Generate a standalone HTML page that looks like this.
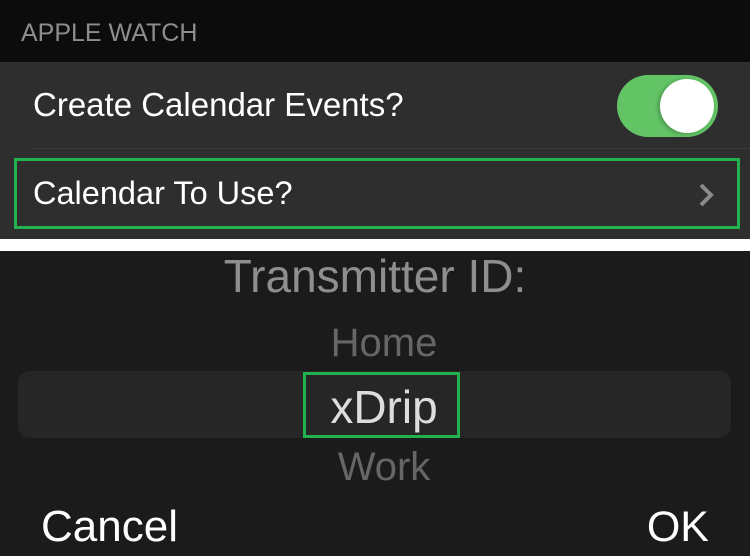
<!DOCTYPE html>
<html><head><style>
*{margin:0;padding:0;box-sizing:border-box}
body{width:750px;height:556px;overflow:hidden;background:#1b1b1b;font-family:"Liberation Sans",sans-serif;position:relative}
.a{position:absolute;white-space:nowrap}
</style></head><body>
<div class="a" style="left:0;top:0;width:750px;height:62px;background:#0c0c0c"></div>
<div class="a" style="left:21px;top:19px;font-size:25px;color:#8e8e8e;line-height:28px">APPLE WATCH</div>
<div class="a" style="left:0;top:62px;width:750px;height:177px;background:#2e2e2e"></div>
<div class="a" style="left:33px;top:148px;width:717px;height:1px;background:#3a3a3a"></div>
<div class="a" style="left:33px;top:86px;font-size:33px;color:#fff;line-height:38px">Create Calendar Events?</div>
<div class="a" style="left:617px;top:75px;width:101px;height:62px;border-radius:31px;background:#63c466"></div>
<div class="a" style="left:660px;top:79px;width:54px;height:54px;border-radius:50%;background:#fff;box-shadow:-2px 1px 4px rgba(0,0,0,.25)"></div>
<div class="a" style="left:14px;top:158px;width:726px;height:71px;border:3px solid #22b14c"></div>
<div class="a" style="left:33px;top:174px;font-size:32.5px;color:#fff;line-height:38px">Calendar To Use?</div>
<svg class="a" style="left:695px;top:181px" width="22" height="28"><path d="M6 4 L16 14 L6 24" fill="none" stroke="#8a8a8a" stroke-width="4"/></svg>
<div class="a" style="left:0;top:239px;width:750px;height:12px;background:#fff"></div>
<div class="a" style="left:0;top:251px;width:750px;height:305px;background:#1b1b1b"></div>
<div class="a" style="left:0;width:750px;text-align:center;top:249px;font-size:46px;color:#8e8e8e;line-height:54px">Transmitter ID:</div>
<div class="a" style="left:0;width:768px;text-align:center;top:320px;font-size:40px;color:#666;line-height:46px">Home</div>
<div class="a" style="left:18px;top:371px;width:713px;height:67px;border-radius:12px;background:#262626"></div>
<div class="a" style="left:303px;top:372px;width:157px;height:66px;border:3px solid #22b14c"></div>
<div class="a" style="left:0;width:768px;text-align:center;top:381px;font-size:46px;color:#ddd;line-height:52px">xDrip</div>
<div class="a" style="left:0;width:768px;text-align:center;top:444px;font-size:40px;color:#666;line-height:46px">Work</div>
<div class="a" style="left:41px;top:502px;font-size:44px;color:#fff;line-height:50px">Cancel</div>
<div class="a" style="right:41px;top:502px;font-size:43px;color:#fff;line-height:50px">OK</div>
</body></html>
